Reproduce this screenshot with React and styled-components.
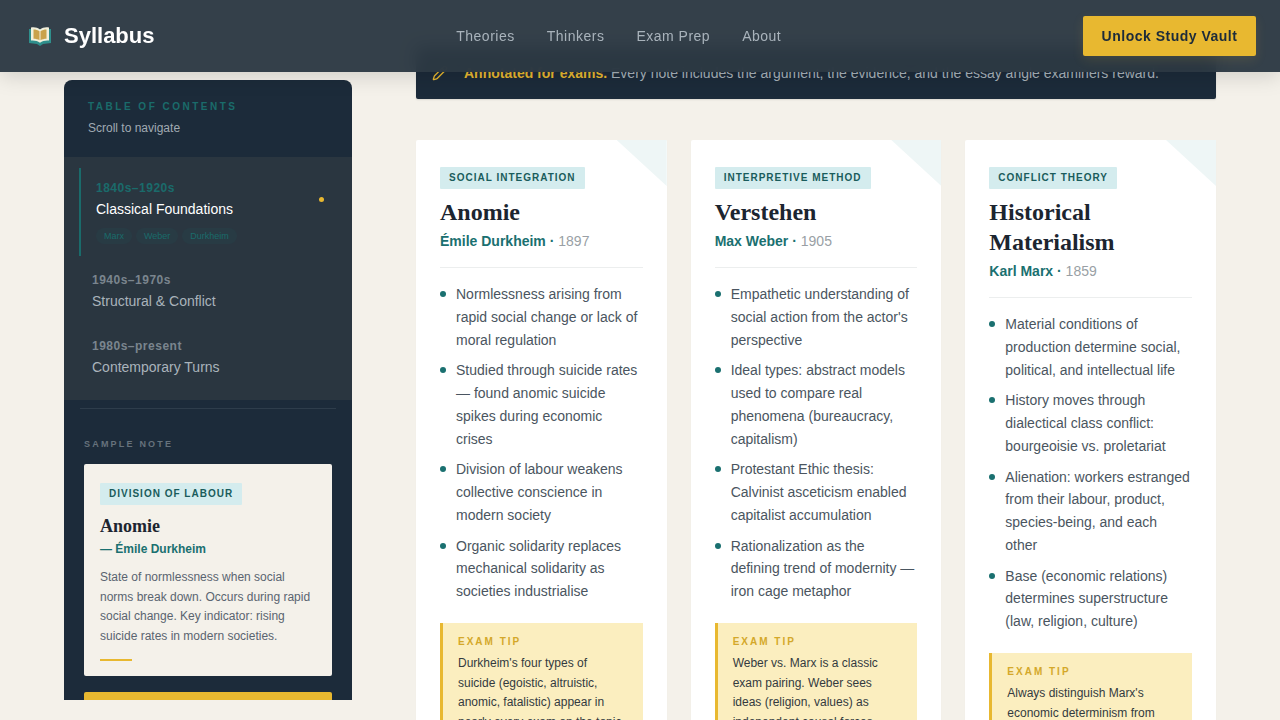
import styled, { createGlobalStyle } from 'styled-components';
import { Pencil } from 'lucide-react';

const navLinks = ['Theories', 'Thinkers', 'Exam Prep', 'About'];

const eras = [
  { id: 1, years: '1840s–1920s', name: 'Classical Foundations', active: true, thinkers: ['Marx', 'Weber', 'Durkheim'] },
  { id: 2, years: '1940s–1970s', name: 'Structural & Conflict' },
  { id: 3, years: '1980s–present', name: 'Contemporary Turns' },
];

const theories = [
  {
    id: 1,
    tag: 'Social Integration',
    title: 'Anomie',
    author: 'Émile Durkheim',
    year: '1897',
    points: [
      'Normlessness arising from rapid social change or lack of moral regulation',
      'Studied through suicide rates — found anomic suicide spikes during economic crises',
      'Division of labour weakens collective conscience in modern society',
      'Organic solidarity replaces mechanical solidarity as societies industrialise',
    ],
    tip: "Durkheim's four types of suicide (egoistic, altruistic, anomic, fatalistic) appear in nearly every exam on the topic.",
  },
  {
    id: 2,
    tag: 'Interpretive Method',
    title: 'Verstehen',
    author: 'Max Weber',
    year: '1905',
    points: [
      "Empathetic understanding of social action from the actor's perspective",
      'Ideal types: abstract models used to compare real phenomena (bureaucracy, capitalism)',
      'Protestant Ethic thesis: Calvinist asceticism enabled capitalist accumulation',
      'Rationalization as the defining trend of modernity — iron cage metaphor',
    ],
    tip: 'Weber vs. Marx is a classic exam pairing. Weber sees ideas (religion, values) as independent causal forces.',
  },
  {
    id: 3,
    tag: 'Conflict Theory',
    title: 'Historical Materialism',
    author: 'Karl Marx',
    year: '1859',
    points: [
      'Material conditions of production determine social, political, and intellectual life',
      'History moves through dialectical class conflict: bourgeoisie vs. proletariat',
      'Alienation: workers estranged from their labour, product, species-being, and each other',
      'Base (economic relations) determines superstructure (law, religion, culture)',
    ],
    tip: "Always distinguish Marx's economic determinism from later Marxist revisions.",
  },
];

const GlobalStyle = createGlobalStyle`
  html, body {
    margin: 0;
    height: 720px;
    overflow: hidden;
    background: #f4f1ea;
    font-family: "Liberation Sans", Arial, sans-serif;
  }
  * { box-sizing: border-box; }
`;

const Header = styled.header`
  position: fixed;
  top: 0;
  left: 0;
  right: 0;
  height: 72px;
  padding: 0 24px 0 28px;
  display: flex;
  align-items: center;
  justify-content: space-between;
  background: rgba(44, 56, 67, 0.96);
  backdrop-filter: blur(8px);
  box-shadow: 0 4px 20px rgba(0, 0, 0, 0.15);
  z-index: 10;
`;

const Brand = styled.div`
  display: flex;
  align-items: center;
  gap: 12px;
  font-size: 22px;
  font-weight: 700;
  color: #fff;
`;

const NavList = styled.nav`
  display: flex;
  gap: 32px;
`;

const NavLink = styled.a`
  font-size: 14px;
  letter-spacing: 0.5px;
  color: #a9b3bb;
`;

const VaultButton = styled.button`
  width: 173px;
  height: 40px;
  border: 0;
  border-radius: 2px;
  background: #e8b830;
  color: #1c2b3a;
  font: 700 14px "Liberation Sans", Arial, sans-serif;
  letter-spacing: 0.5px;
  box-shadow: 0 4px 12px rgba(232, 184, 48, 0.12);
`;

const Layout = styled.div`
  display: flex;
  align-items: flex-start;
  gap: 64px;
  padding: 47px 64px 0;
`;

const Sidebar = styled.aside`
  flex: 0 0 288px;
  height: 620px;
  margin-top: 33px;
  overflow: hidden;
  border-radius: 8px 8px 0 0;
  background: #1c2b3a;
`;

const SideHead = styled.div`
  height: 77px;
  padding: 20px 24px 0;
`;

const SideEyebrow = styled.div`
  font-size: 10px;
  font-weight: 700;
  line-height: 14px;
  letter-spacing: 2.5px;
  text-transform: uppercase;
  color: #1a6b6b;
`;

const SideHint = styled.div`
  margin-top: 7px;
  font-size: 12px;
  line-height: 14px;
  color: #a0aab2;
`;

const EraList = styled.div`
  height: 243px;
  padding: 11px 0 0 15px;
  background: #2a3640;
`;

const EraItem = styled.div`
  position: relative;
  padding: ${(p) => (p.$active ? '12px 15px 0' : '16px 13px 0')};
  height: ${(p) => (p.$active ? '88px' : '66px')};
  border-left: ${(p) => (p.$active ? '2px solid #1a6b6b' : '0')};
`;

const EraYears = styled.div`
  font-size: 12px;
  font-weight: 700;
  line-height: 16px;
  letter-spacing: 0.5px;
  color: ${(p) => (p.$active ? '#1a6b6b' : '#7a858e')};
`;

const EraName = styled.div`
  margin-top: 3px;
  font-size: 14px;
  line-height: 20px;
  color: ${(p) => (p.$active ? '#fff' : '#a9b3bb')};
`;

const EraDot = styled.span`
  position: absolute;
  top: 29px;
  right: 28px;
  width: 5px;
  height: 5px;
  border-radius: 50%;
  background: #e8b830;
`;

const ThinkerRow = styled.div`
  display: flex;
  gap: 4px;
  margin-top: 9px;
`;

const ThinkerChip = styled.span`
  padding: 2px 8px;
  border-radius: 10px;
  background: rgba(26, 107, 107, 0.1);
  font-size: 9px;
  line-height: 12px;
  color: #1a6b6b;
`;

const SideRule = styled.hr`
  margin: 8px 16px 0;
  border: 0;
  border-top: 1px solid #2e3d4b;
`;

const SampleBlock = styled.div`
  padding: 29px 20px 0;
`;

const SampleLabel = styled.div`
  font-size: 9px;
  line-height: 12px;
  font-weight: 700;
  letter-spacing: 2.2px;
  color: #66727c;
`;

const SampleCard = styled.div`
  height: 212px;
  margin-top: 14px;
  padding: 19px 16px 0;
  border-radius: 2px;
  background: #f4f1ea;
`;

const Tag = styled.span`
  display: inline-block;
  padding: 0 9px;
  border-radius: 1px;
  background: #d4ecee;
  font-size: 10px;
  font-weight: 700;
  line-height: 22px;
  letter-spacing: 1px;
  text-transform: uppercase;
  color: #1a5c5c;
`;

const SampleTitle = styled.h4`
  margin: 9px 0 0;
  font: 700 18px/24px "Liberation Serif", "Times New Roman", serif;
  color: #1c2530;
`;

const SampleAuthor = styled.div`
  margin-top: 3px;
  font-size: 12px;
  font-weight: 700;
  line-height: 16px;
  color: #1a7070;
`;

const SampleText = styled.p`
  margin: 11px 0 0;
  font-size: 12px;
  line-height: 19.5px;
  color: #5a6470;
`;

const SampleLine = styled.div`
  width: 32px;
  height: 2px;
  margin-top: 13px;
  background: #e8b830;
`;

const SampleButton = styled.div`
  height: 40px;
  margin-top: 16px;
  border-radius: 2px;
  background: #e8b830;
`;

const Main = styled.main`
  flex: 0 0 800px;
`;

const Banner = styled.div`
  display: flex;
  align-items: center;
  gap: 16px;
  height: 52px;
  padding: 0 16px;
  border-radius: 2px;
  background: #1c2b3a;
  font-size: 14px;
  color: #a9b3bb;
  box-shadow: 0 1px 2px rgba(0, 0, 0, 0.1);

  strong {
    color: #e8b830;
  }
`;

const CardGrid = styled.div`
  display: grid;
  grid-template-columns: repeat(3, 1fr);
  gap: 24px;
  align-items: start;
  margin-top: 41px;
`;

const Card = styled.article`
  position: relative;
  padding: 27px 24px 24px;
  background: #fff;
  border-radius: 2px;
  box-shadow: 0 1px 3px rgba(0, 0, 0, 0.02);

  &::after {
    content: '';
    position: absolute;
    top: 0;
    right: 0;
    width: 50px;
    height: 46px;
    background: #eef6f6;
    clip-path: polygon(0 0, 100% 0, 100% 100%);
  }
`;

const CardTitle = styled.h3`
  margin: 8px 0 0;
  font: 700 24px/30px "Liberation Serif", "Times New Roman", serif;
  color: #1c2530;
`;

const CardAuthor = styled.div`
  margin-top: 4px;
  font-size: 14px;
  line-height: 20px;
  color: #999fa5;

  b {
    color: #1a7070;
  }
`;

const CardRule = styled.hr`
  margin: 16px 0 15px;
  border: 0;
  border-top: 1px solid #eceeee;
`;

const PointList = styled.ul`
  display: flex;
  flex-direction: column;
  gap: 8px;
  margin: 0;
  padding: 0;
  list-style: none;
`;

const Point = styled.li`
  position: relative;
  padding-left: 16px;
  font-size: 14px;
  line-height: 22.75px;
  color: #4a5560;

  &::before {
    content: '';
    position: absolute;
    left: 0;
    top: 8px;
    width: 6px;
    height: 6px;
    border-radius: 50%;
    background: #1a7070;
  }
`;

const TipBox = styled.div`
  margin-top: 20px;
  padding: 12px 15px 14px;
  border-left: 3px solid #e8b830;
  background: #fbeebf;
`;

const TipLabel = styled.div`
  font-size: 10px;
  font-weight: 700;
  line-height: 14px;
  letter-spacing: 2px;
  color: #d4a82a;
`;

const TipText = styled.p`
  margin: 5px 0 0;
  font-size: 12px;
  line-height: 19.8px;
  color: #333a40;
`;

// libro abierto del logo
const BookIcon = () => (
  <svg width="24" height="24" viewBox="0 0 24 24" aria-hidden="true">
    <path d="M1 5h22v14l-8 1-3 2-3-2-8-1z" fill="#2f8f8c" />
    <path d="M3 3.500c3.500-.5 6.500 0 9 2 2.500-2 5.500-2.500 9-2v13c-3.500-.3-6.500.3-9 2.200-2.500-1.900-5.500-2.500-9-2.200z" fill="#f1f0dc" />
    <path d="M5.500 5.500c2.200 0 4.500.5 6 1.800v9c-1.500-1-3.800-1.500-6-1.500z" fill="#c9a24a" />
    <path d="M18.500 5.500c-2.200 0-4.500.5-6 1.800v9c1.500-1 3.800-1.500 6-1.500z" fill="#c9a24a" />
  </svg>
);

const App = () => (
  <>
    <GlobalStyle />
    <Header>
      <Brand>
        <BookIcon />
        Syllabus
      </Brand>
      <NavList>
        {navLinks.map((link) => (
          <NavLink key={link}>{link}</NavLink>
        ))}
      </NavList>
      <VaultButton>Unlock Study Vault</VaultButton>
    </Header>

    <Layout>
      <Sidebar>
        <SideHead>
          <SideEyebrow>Table of Contents</SideEyebrow>
          <SideHint>Scroll to navigate</SideHint>
        </SideHead>
        <EraList>
          {eras.map((era) => (
            <EraItem key={era.id} $active={era.active}>
              <EraYears $active={era.active}>{era.years}</EraYears>
              <EraName $active={era.active}>{era.name}</EraName>
              {era.active && <EraDot />}
              {era.thinkers && (
                <ThinkerRow>
                  {era.thinkers.map((name) => (
                    <ThinkerChip key={name}>{name}</ThinkerChip>
                  ))}
                </ThinkerRow>
              )}
            </EraItem>
          ))}
        </EraList>
        <SideRule />
        <SampleBlock>
          <SampleLabel>SAMPLE NOTE</SampleLabel>
          <SampleCard>
            <Tag>Division of Labour</Tag>
            <SampleTitle>Anomie</SampleTitle>
            <SampleAuthor>— Émile Durkheim</SampleAuthor>
            <SampleText>
              State of normlessness when social norms break down. Occurs during rapid social change. Key indicator: rising suicide rates in modern societies.
            </SampleText>
            <SampleLine />
          </SampleCard>
          <SampleButton />
        </SampleBlock>
      </Sidebar>

      <Main>
        <Banner>
          <Pencil size={16} color="#e8b830" />
          <span>
            <strong>Annotated for exams.</strong> Every note includes the argument, the evidence, and the essay angle examiners reward.
          </span>
        </Banner>
        <CardGrid>
          {theories.map((theory) => (
            <Card key={theory.id}>
              <Tag>{theory.tag}</Tag>
              <CardTitle>{theory.title}</CardTitle>
              <CardAuthor>
                <b>{theory.author} ·</b> {theory.year}
              </CardAuthor>
              <CardRule />
              <PointList>
                {theory.points.map((point) => (
                  <Point key={point}>{point}</Point>
                ))}
              </PointList>
              <TipBox>
                <TipLabel>EXAM TIP</TipLabel>
                <TipText>{theory.tip}</TipText>
              </TipBox>
            </Card>
          ))}
        </CardGrid>
      </Main>
    </Layout>
  </>
);

export default App;
